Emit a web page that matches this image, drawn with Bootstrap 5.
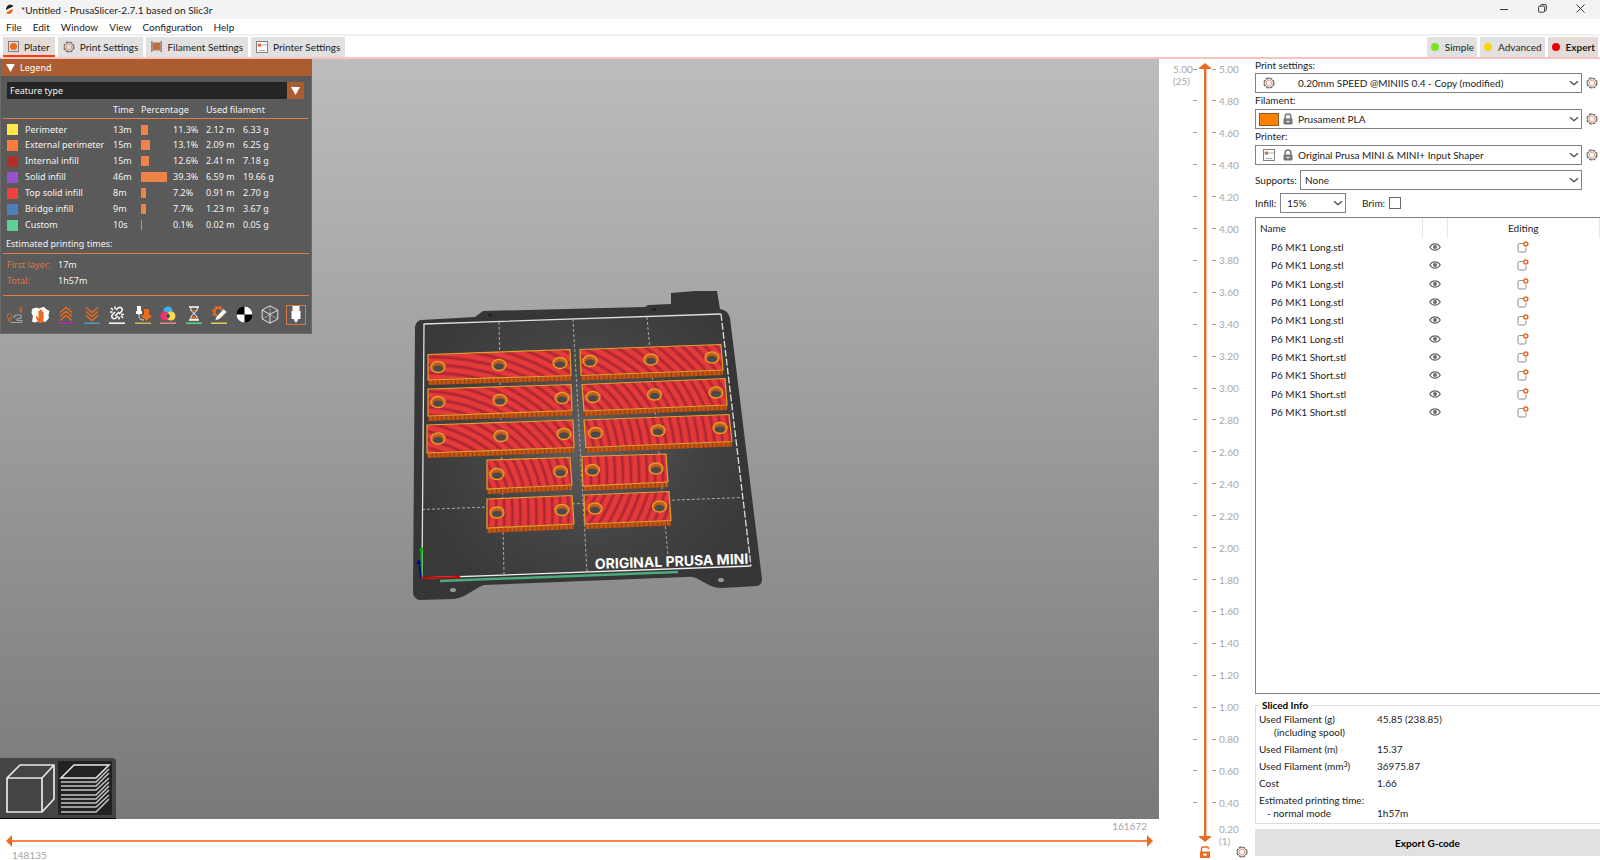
<!DOCTYPE html>
<html lang="en">
<head>
<meta charset="utf-8">
<meta name="viewport" content="width=device-width, initial-scale=1">
<title>*Untitled - PrusaSlicer-2.7.1 based on Slic3r</title>
<link href="https://cdn.jsdelivr.net/npm/bootstrap@5.3.0/dist/css/bootstrap.min.css" rel="stylesheet">
<style>
  body { font: 10px/12px Lato, "Open Sans", sans-serif; color: #1c1c1c; background: #fff; }
  button, select, input { font: inherit; color: inherit; }
  svg { display: block; flex: none; }
  .titlebar { height: 19px; background: #f3f3f3; }
  .winbtn { border: 0; background: none; width: 38px; padding: 0 2px 2px 0; display: flex; justify-content: center; align-items: center; }
  .menubar { height: 17px; border-bottom: 2px solid #f0f0f0; gap: 11px; padding: 0 6px; }
  .menubar a { color: #1c1c1c; text-decoration: none; }
  .tabs { height: 23px; gap: 3px; padding: 1px 2px 0 3px; border-bottom: 2px solid #f8c4be; }
  .tab { border: 0; background: #e1e1e1; height: 20px; padding: 0 5px 1px; display: flex; align-items: center; gap: 5px; line-height: 12px; }
  .tab.on { background: #e3dbd8; }
  .tab.line { border-bottom: 2px solid #fb3a12; padding-top: 1px; padding-bottom: 0; }
  .mode { padding: 0 3px 1px 4px; gap: 6px; }
  .stage { background: linear-gradient(#bcbcbc, #797979); }
  .legend-box { font: 9px/12px "Noto Sans", sans-serif; color: #f2f2f2; background: #5a5a5a; width: 312px; height: 275px; border: 1px solid #6c6c6c; border-top: 0; top: 0; left: 0; }
  .legend-head { height: 18px; background: #ab5c31; border: 0; color: #fff; gap: 5px; padding: 0 5px; font-size: 9px; }
  .legend-box select { appearance: none; border: 0; border-radius: 0; background: #252525; color: #f2f2f2; height: 17px; padding: 1px 3px 0; }
  .combo-arrow { width: 17px; height: 17px; background: #ab5c31; display: grid; place-items: center; pointer-events: none; }
  .legend-table { table-layout: fixed; width: 305px; margin: 0 2px; }
  .legend-table th { font-weight: 400; height: 19px; padding: 3px 0 0; border-bottom: 1px solid #e57c46; }
  .legend-table td { height: 16px; padding: 0; white-space: nowrap; }
  .legend-table tbody tr:first-child td { height: 19px; padding-top: 3px; }
  .swatch { width: 11px; height: 11px; margin-left: 4px; }
  .share { height: 10px; background: #ed8345; }
  .rule { height: 1px; background: #e57c46; margin: 0 2px; }
  .accent { color: #da7743; width: 51px; }
  .iconbar { padding: 0 5px 0 4px; height: 38px; }
  .iconbar button { border: 0; background: none; padding: 0; width: 20px; height: 20px; display: grid; place-items: center; }
  .iconbar button.on { border: 1px solid #da7743; }
  .views { background: #444; bottom: 0; left: 0; border-radius: 0 4px 0 0; padding: 3px 4px; border-bottom: 1px solid #000; }
  .views button { border: 0; padding: 0; background: none; width: 54px; height: 54px; }
  .views button.on { background: #222; }
  .hscale { height: 41px; color: #a5a5a5; padding: 1px 6px 0 6px; }
  .rail { appearance: none; margin: 0; padding: 0; border: 0; }
  .rail::-webkit-slider-thumb { appearance: none; width: 1px; height: 1px; }
  .rail.flat { height: 2px; background: #ff8346; }
  .rail.tall { width: 3px; background: linear-gradient(90deg, #ed6b21 67%, #fbc5aa 67%); }
  .vscale { width: 96px; color: #a8a8a8; padding: 4px 7px 0 14px; }
  .tick { height: 12px; display: flex; align-items: center; gap: 3px; }
  .dash { width: 4px; height: 1px; background: #a0a0a0; }
  .side { width: 345px; }
  .pick { appearance: none; border: 1px solid #828282; border-radius: 0; background: #fff; height: 20px; width: 100%; padding: 0 8px; color: #1c1c1c; }
  .pick.iconed { padding-left: 42px; }
  .over-left { left: 4px; top: 0; height: 20px; pointer-events: none; }
  .over-right { right: 3px; top: 0; height: 20px; pointer-events: none; }
  .preset { display: grid; grid-template-columns: 1fr 18px; align-items: center; }
  .gearbtn { border: 0; background: none; padding: 0 0 0 4px; }
  .caption { height: 16px; padding-top: 1px; }
  .caption:first-child { height: 14px; padding-top: 0; }
  .tickbox { appearance: none; width: 12px; height: 12px; border: 1px solid #6a6a6a; margin: 0; background: #fff; }
  .objects { border: 1px solid #828282; border-right: 0; margin-top: 4px; }
  .objects table { table-layout: fixed; width: 100%; height: 203px; }
  .objects th { font-weight: 400; height: 20px; padding: 0; border-right: 1px solid #e5e5e5; }
  .objects td { padding: 0; }
  .sliced { margin: 5px 0 0; padding: 0 3px; border: 1px solid #dcdcdc; border-right: 0; height: 125px; }
  .sliced legend { font-size: 10px; line-height: 12px; font-weight: 700; float: none; width: auto; margin: 0; padding: 0 3px; color: #000; }
  .info { display: grid; grid-template-columns: 118px 1fr; row-gap: 4px; padding-top: 2px; line-height: 13px; }
  .info dt, .info dd { font-weight: 400; margin: 0; }
  .info sup { font-size: 7px; line-height: 0; }
  .export { border: 0; background: #e1e1e1; height: 27px; font-weight: 700; color: #000; margin: 5px 0 4px; }
</style>
</head>
<body class="vh-100 d-flex flex-column overflow-hidden">

<svg width="0" height="0" class="position-absolute" aria-hidden="true">
  <symbol id="gear" viewBox="0 0 12 12"><circle cx="6" cy="6" r="5" fill="none" stroke="#777" stroke-width="1.3" stroke-dasharray="2.9 1.03"/><circle cx="6" cy="6" r="4.4" fill="none" stroke="#777" stroke-width=".8"/><circle cx="6" cy="6" r="2.7" fill="none" stroke="#f08a5a" stroke-width="1.1" stroke-dasharray="1.5 .62"/></symbol>
  <symbol id="chev" viewBox="0 0 10 6"><path d="M1 1.3l4 3.4 4-3.4" fill="none" stroke="#444" stroke-width="1.2"/></symbol>
  <symbol id="lock" viewBox="0 0 10 12"><path d="M2.2 6V3.4a2.8 2.4 0 0 1 5.6 0V6" fill="none" stroke="#777" stroke-width="1.5"/><rect x=".5" y="5.4" width="9" height="6.2" rx=".8" fill="#777"/><path d="M3.5 8.5h3" stroke="#fff" stroke-width="1.2"/></symbol>
  <symbol id="printer" viewBox="0 0 12 12"><rect x=".5" y=".5" width="11" height="11" fill="#fff" stroke="#808080"/><path d="M1 4h10M2.5 9.5h7" stroke="#999" stroke-width=".8"/><rect x="2" y="2.6" width="3" height="3" fill="#ed6b21"/></symbol>
  <symbol id="eye" viewBox="0 0 12 8"><path d="M.8 4C3-.2 9-.2 11.2 4 9 8.200 3 8.200.8 4z" fill="none" stroke="#6e6e6e" stroke-width="1.3"/><circle cx="6" cy="4" r="2" fill="#6e6e6e"/></symbol>
  <symbol id="edit" viewBox="0 0 12 12"><path d="M6 2.500H2.500Q1 2.500 1 4v5.500Q1 11 2.500 11H7.500Q9 11 9 9.500V6.500" fill="none" stroke="#8a8a8a" stroke-width="1"/><circle cx="8.800" cy="3" r="2" fill="#fff" stroke="#ed6b21" stroke-width="1.500"/></symbol>
</svg>

<header class="titlebar d-flex align-items-stretch">
  <div class="d-flex align-items-center flex-grow-1 ps-1" style="gap:6px">
    <svg width="11" height="11" viewBox="0 0 11 11"><circle cx="5.500" cy="5.500" r="5.500" fill="#fff"/><path d="M2 4.500Q3 1 6 .6 9 .6 9 2.500L2 6z" fill="#222"/><path d="M2 8.500L9 4.500Q9 8 6.500 9.800 3 10.800 2 8.500z" fill="#ed6b21"/></svg>
    <span>*Untitled - PrusaSlicer-2.7.1 based on Slic3r</span>
  </div>
  <button class="winbtn" aria-label="Minimize"><svg width="8" height="8" viewBox="0 0 8 8"><path d="M0 4.500h8" stroke="#222" stroke-width=".9"/></svg></button>
  <button class="winbtn" aria-label="Restore"><svg width="9" height="9" viewBox="0 0 9 9" fill="none" stroke="#222" stroke-width=".9"><rect x=".6" y="2.200" width="6" height="6" rx="1"/><path d="M2.500 1.900V1.500Q2.500.6 3.500.6H7Q8.400.6 8.400 2v3.500Q8.400 6.600 7.500 6.600H7"/></svg></button>
  <button class="winbtn" aria-label="Close"><svg width="9" height="9" viewBox="0 0 9 9"><path d="M.5.500l8 8M8.500.500l-8 8" stroke="#222" stroke-width=".9"/></svg></button>
</header>

<nav class="menubar d-flex align-items-center">
  <a href="#">File</a><a href="#">Edit</a><a href="#">Window</a><a href="#">View</a><a href="#">Configuration</a><a href="#">Help</a>
</nav>

<div class="tabs d-flex">
  <button class="tab on line"><svg width="11" height="11" viewBox="0 0 11 11"><rect x=".5" y=".5" width="10" height="10" fill="#ddd" stroke="#808080"/><circle cx="5.500" cy="5.500" r="3.600" fill="#ed6b21"/></svg>Plater</button>
  <button class="tab"><svg width="12" height="12"><use href="#gear"/></svg>Print Settings</button>
  <button class="tab"><svg width="11" height="11" viewBox="0 0 11 11"><path d="M.8 0v11M10.200 0v11" stroke="#888" stroke-width="1.500"/><rect x="1.500" y="1.500" width="8" height="8" fill="#bd6f45"/></svg>Filament Settings</button>
  <button class="tab"><svg width="12" height="12"><use href="#printer"/></svg>Printer Settings</button>
  <span class="flex-grow-1"></span>
  <button class="tab mode"><svg width="8" height="8"><circle cx="4" cy="4" r="4" fill="#7be322"/></svg>Simple</button>
  <button class="tab mode"><svg width="8" height="8"><circle cx="4" cy="4" r="4" fill="#ffd500"/></svg>Advanced</button>
  <button class="tab mode on fw-bold"><svg width="8" height="8"><circle cx="4" cy="4" r="4" fill="#e80000"/></svg>Expert</button>
</div>

<main class="d-flex flex-grow-1" style="min-height:0">
  <section class="d-flex flex-column flex-grow-1" style="min-width:0">
    <div class="stage position-relative flex-grow-1" style="min-height:0">
      <svg id="scene" class="w-100 h-100" viewBox="0 59 1159 760">
        <defs><radialGradient id="glow" gradientUnits="userSpaceOnUse" cx="585" cy="440" r="180"><stop offset="0" stop-color="#606060"/><stop offset=".55" stop-color="#444"/><stop offset="1" stop-color="#393939"/></radialGradient></defs>
        <path d="M415 327Q416 321 421 320L475 317 483 311 645 307 648 305 671 304 671 293 695 291 717 291 720 309Q728 310 730 318L762 579Q762 585 757 586L722 588Q714 588 707 584L696 578Q691 576 685 577L484 585Q480 586 476 589L464 596Q460 598 454 599L419 600Q413 598 413 592z" fill="#363636"/>
        <path d="M424 324L721 314 751 566 422 578z" fill="url(#glow)"/>
        <g fill="#222"><ellipse cx="490" cy="315" rx="2.500" ry="1.500"/><ellipse cx="654" cy="309.500" rx="2.500" ry="1.500"/></g>
        <g fill="#999"><ellipse cx="453" cy="590" rx="3" ry="2"/><ellipse cx="721" cy="580" rx="3" ry="2"/></g>
        <g stroke="#a8a8a8" stroke-width="1" stroke-dasharray="3 2" fill="none"><path d="M499 322L504 575M573 319L587 572M647 317L668 556M422 509.500L743 497.500"/></g>
        <path d="M422 578L424 324 721 314" fill="none" stroke="#dedede" stroke-width="1.300"/>
        <path d="M721 314L751 566" fill="none" stroke="#ddd" stroke-width="1.300" stroke-dasharray="7 2"/>
        <path d="M422 578L751 566" stroke="#eee" stroke-width="1.300"/>
        <path d="M440 581L678 572" stroke="#4bab7c" stroke-width="2.500"/>
        <path d="M421 578h1L460 577" stroke="#d80000" stroke-width="2"/><path d="M455 574.500l6 2.500-6 2z" fill="#d80000"/>
        <path d="M421.500 577V549" stroke="#00b800" stroke-width="2"/><path d="M419 551l2.500-5 2.500 5z" fill="#00b800"/>
        <path d="M421 578L419 561" stroke="#0000a0" stroke-width="1.500"/><path d="M416.500 564l2-5 3 4.500z" fill="#0000a0"/>
        <text x="595" y="569" transform="rotate(-2 595 569)" font-family="Inter, sans-serif" font-weight="700" font-size="14" fill="#fff">ORIGINAL PRUSA MINI</text>
        <g id="parts"></g>
      </svg>

      <div class="legend-box position-absolute d-flex flex-column">
        <button class="legend-head d-flex align-items-center"><svg width="9" height="8"><path d="M0 0h9L4.500 8z" fill="#fff"/></svg>Legend</button>
        <div class="d-flex" style="margin:6px 7px 0 6px"><select class="flex-grow-1" aria-label="Legend view"><option>Feature type</option></select><span class="combo-arrow"><svg width="9" height="8"><path d="M0 0h9L4.500 8z" fill="#fff"/></svg></span></div>
        <table class="legend-table">
          <colgroup><col style="width:22px"><col style="width:88px"><col style="width:28px"><col style="width:32px"><col style="width:33px"><col style="width:37px"><col></colgroup>
          <thead><tr><th></th><th></th><th>Time</th><th colspan="2">Percentage</th><th colspan="2">Used filament</th></tr></thead>
          <tbody id="features"></tbody>
        </table>
        <div style="padding:5px 5px 3px">Estimated printing times:</div>
        <div class="rule"></div>
        <div class="d-flex" style="padding:5px 6px 4px"><span class="accent">First layer:</span><span>17m</span></div>
        <div class="d-flex" style="padding:0 6px 8px"><span class="accent">Total:</span><span>1h57m</span></div>
        <div class="rule"></div>
        <div class="iconbar d-flex justify-content-between align-items-center">
          <button aria-label="Travel"><svg width="18" height="18" viewBox="0 0 18 18" fill="none"><circle cx="3.500" cy="10" r="2.300" stroke="#c96a3a"/><path d="M1.700 12l1.800 4 1.800-4" stroke="#c96a3a"/><circle cx="15" cy="2.500" r="1.500" stroke="#c96a3a"/><path d="M13.700 4L15 7l1.300-3" stroke="#c96a3a"/><path d="M5 16.500h10q2 0 1-2h-5q-1-2 1-2h3V9H9v2H7" stroke="#aaa"/></svg></button>
          <button aria-label="Wipe"><svg width="19" height="18" viewBox="0 0 19 18"><path d="M1 3L5 1.500 8 2.500 13 .8 15 3 18.500 5 17.500 9 18 12 14.500 16 9 14.500 4 16.500 1 15.500 2 10 .5 7z" fill="#fff"/><path d="M7 16L4.500 10.500l1.300-.6L7.500 12V5h1.200v4V3.500h1.400V9V4h1.300v5.500V6h1.200v6q0 3-1.600 5H8z" fill="#ed6b21"/></svg></button>
          <button aria-label="Retractions"><svg width="16" height="18" viewBox="0 0 16 18" fill="none" stroke="#ed6b21" stroke-width="1.400"><path d="M2 6.500l6-5 6 5M2 10.500l6-5 6 5M2 14.500l6-5 6 5"/><path d="M0 17.200h16" stroke="#c022c0"/></svg></button>
          <button aria-label="Deretractions"><svg width="16" height="18" viewBox="0 0 16 18" fill="none" stroke="#ed6b21" stroke-width="1.400"><path d="M2 1.500l6 5 6-5M2 5.500l6 5 6-5M2 9.500l6 5 6-5"/><path d="M0 17.200h16" stroke="#48a6cc"/></svg></button>
          <button aria-label="Seams"><svg width="16" height="18" viewBox="0 0 16 18" fill="none" stroke="#fff" stroke-width="1.500"><path d="M7 4l2-2q2-1.500 3.500 0t0 3.500L10 8M6 6L3.500 8.500Q2 10.500 3.500 12T7 12l2-2M6 10l4-4M2 2l2 2M6 .5V3M1 6h2.500M12 10l2 2M10 11v2.500M12 8.500h3"/><path d="M0 17.200h16"/></svg></button>
          <button aria-label="Tool changes"><svg width="16" height="18" viewBox="0 0 16 18"><path d="M2 0h4v5h1v3H5L4 10 3 8H1V5h1z" fill="#fff"/><path d="M9 3h5v6h2v3h-2l-2.500 3L9 12H7V9h2z" fill="#ed6b21"/><path d="M4 10q0 4 5 4" fill="none" stroke="#ddd"/><path d="M0 17.200h16" stroke="#c8bd52" stroke-width="1.500"/></svg></button>
          <button aria-label="Color changes"><svg width="16" height="18" viewBox="0 0 16 18"><circle cx="8" cy="5" r="4.500" fill="#36b4ee"/><circle cx="4.800" cy="10" r="4.500" fill="#ef2f72"/><circle cx="11" cy="10" r="4.500" fill="#ffd84a"/><path d="M8 7l2 3-2 3-2-3z" fill="#444"/><path d="M0 17.200h16" stroke="#d98e84" stroke-width="1.500"/></svg></button>
          <button aria-label="Pause prints"><svg width="16" height="18" viewBox="0 0 16 18"><path d="M3 1h10M3 14h10" stroke="#fff" stroke-width="1.700"/><path d="M4.500 1.500q0 4 3.500 6-3.500 2-3.500 6h7q0-4-3.500-6 3.500-2 3.500-6" fill="none" stroke="#fff"/><path d="M6 4h4L8 6.500zM5.500 13q1-3 2.500-3t2.500 3z" fill="#ed6b21"/><path d="M0 17.200h16" stroke="#51e081" stroke-width="1.500"/></svg></button>
          <button aria-label="Custom G-codes"><svg width="16" height="18" viewBox="0 0 16 18"><circle cx="7.500" cy="6" r="4" fill="none" stroke="#ed6b21" stroke-width="2.200"/><circle cx="7.500" cy="6" r="5.700" fill="none" stroke="#ed6b21" stroke-width="1.500" stroke-dasharray="2.400 2.080"/><path d="M4 14.500L5 11l7.500-8L16 6l-8 7.500z" fill="#fff" stroke="#5a5a5a" stroke-width=".7"/><path d="M0 17.200h16" stroke="#e6d14d" stroke-width="1.500"/></svg></button>
          <button aria-label="Center of gravity"><svg width="17" height="17" viewBox="0 0 17 17"><circle cx="8.500" cy="8.500" r="8" fill="#000"/><path d="M8.500 8.500V.5a8 8 0 0 1 8 8zM8.500 8.500v8a8 8 0 0 1-8-8z" fill="#fff"/></svg></button>
          <button aria-label="Shells"><svg width="18" height="19" viewBox="0 0 18 19" fill="none" stroke="#e2e2e2"><path d="M9 .8l7.800 4.200v9L9 18.200 1.200 14V5zM9 9.500v8.700M1.200 5L9 9.500 16.800 5"/><path d="M1.200 14L9 9.500l7.800 4.500M9 .8v8.700" stroke="#bbb" stroke-dasharray="2 1"/></svg></button>
          <button class="on" aria-label="Tool marker"><svg width="12" height="17" viewBox="0 0 12 17"><path d="M2.500 0h7v5H10.500v8H8.500L6 17l-2.500-4h-2V5h1z" fill="#fff"/></svg></button>
        </div>
      </div>

      <div class="views position-absolute d-flex">
        <button aria-label="3D editor view"><svg width="54" height="54" viewBox="0 0 54 54" fill="none" stroke="#e8e8e8" stroke-width="1.700" stroke-linejoin="round"><path d="M3 17h35v34H3zM3 17L16 4h34L38 17M50 4v34L38 51"/></svg></button>
        <button class="on" aria-label="Preview"><svg width="54" height="54" viewBox="0 0 54 54" fill="none" stroke="#c4c4c4" stroke-width="1.500"><path stroke="#e8e8e8" d="M3 17L16 4h35L38 17z"/><path d="M3 21h35L51 8M3 25h35L51 12M3 29h35L51 17M3 34h35L51 21M3 38h35L51 25M3 42h35L51 29M3 46h35L51 34M3 51h35L51 38"/></svg></button>
      </div>
    </div>
    <div class="hscale d-flex flex-column gap-1">
      <div class="text-end" style="padding-right:6px">161672</div>
      <div class="d-flex align-items-center" style="height:9px"><svg width="6" height="12"><path d="M6 0v12L0 6z" fill="#ed6b21"/></svg><input type="range" class="rail flat flex-grow-1" aria-label="Moves"><svg width="6" height="12"><path d="M0 0v12l6-6z" fill="#ed6b21"/></svg></div>
      <div style="padding-left:6px">148135</div>
    </div>
  </section>

  <section class="vscale d-flex">
    <div style="width:20px">5.00<br>(25)</div>
    <div id="ticksL" class="d-flex flex-column justify-content-between" style="width:5px;margin-bottom:51px"></div>
    <div class="d-flex flex-column align-items-center" style="width:14px">
      <svg width="12" height="6"><path d="M6 0l6 5v1H0V5z" fill="#ed6b21"/></svg>
      <input type="range" class="rail tall flex-grow-1" aria-label="Layers">
      <svg width="12" height="6"><path d="M0 0h12v1L6 6 0 1z" fill="#ed6b21"/></svg>
      <button class="border-0 bg-transparent p-0 mt-1" style="margin-bottom:2px" aria-label="Unlock"><svg width="10" height="12" viewBox="0 0 10 12"><path d="M1.500 6V2.500Q1.500 1 3 1h4q1.500 0 1.500 2" fill="none" stroke="#ed6b21" stroke-width="1.500"/><path d="M0 5.500h10V12H0z" fill="#ed6b21"/><path d="M3 8.700h4M5 7.200v3" stroke="#fff" stroke-width="1.200"/></svg></button>
    </div>
    <div class="d-flex flex-column flex-grow-1">
      <div id="ticksR" class="d-flex flex-column justify-content-between flex-grow-1" style="margin-bottom:14px"></div>
      <div style="padding-left:7px;height:37px">0.20<br>(1)</div>
    </div>
    <button class="gearbtn align-self-end p-0" style="margin:0 0 2px -12px" aria-label="Slider settings"><svg width="12" height="12"><use href="#gear"/></svg></button>
  </section>

  <aside class="side d-flex flex-column flex-shrink-0">
    <label class="caption" for="ps">Print settings:</label>
    <div class="preset">
      <div class="position-relative"><select id="ps" class="pick iconed d-block"><option>0.20mm SPEED @MINIIS 0.4 - Copy (modified)</option></select><span class="over-left position-absolute d-flex align-items-center ps-1"><svg width="12" height="12"><use href="#gear"/></svg></span><span class="over-right position-absolute d-flex align-items-center"><svg width="10" height="6"><use href="#chev"/></svg></span></div>
      <button class="gearbtn" aria-label="Edit print preset"><svg width="12" height="12"><use href="#gear"/></svg></button>
    </div>
    <label class="caption" for="fi">Filament:</label>
    <div class="preset">
      <div class="position-relative"><select id="fi" class="pick iconed d-block"><option>Prusament PLA</option></select><span class="over-left position-absolute d-flex align-items-center gap-1"><svg width="20" height="13"><rect x=".5" y=".5" width="19" height="12" fill="#ff8000" stroke="#8a5a28"/></svg><svg width="10" height="12"><use href="#lock"/></svg></span><span class="over-right position-absolute d-flex align-items-center"><svg width="10" height="6"><use href="#chev"/></svg></span></div>
      <button class="gearbtn" aria-label="Edit filament preset"><svg width="12" height="12"><use href="#gear"/></svg></button>
    </div>
    <label class="caption" for="pr">Printer:</label>
    <div class="preset">
      <div class="position-relative"><select id="pr" class="pick iconed d-block"><option>Original Prusa MINI &amp; MINI+ Input Shaper</option></select><span class="over-left position-absolute d-flex align-items-center gap-2 ps-1"><svg width="12" height="12"><use href="#printer"/></svg><svg width="10" height="12"><use href="#lock"/></svg></span><span class="over-right position-absolute d-flex align-items-center"><svg width="10" height="6"><use href="#chev"/></svg></span></div>
      <button class="gearbtn" aria-label="Edit printer preset"><svg width="12" height="12"><use href="#gear"/></svg></button>
    </div>
    <div class="d-flex align-items-center" style="margin:5px 18px 3px 0"><label for="su" style="width:45px">Supports:</label><div class="position-relative flex-grow-1"><select id="su" class="pick d-block" style="padding-left:4px"><option>None</option></select><span class="over-right position-absolute d-flex align-items-center"><svg width="10" height="6"><use href="#chev"/></svg></span></div></div>
    <div class="d-flex align-items-center"><label for="inf" style="width:25px">Infill:</label><div class="position-relative" style="width:66px"><select id="inf" class="pick d-block" style="padding-left:6px"><option>15%</option></select><span class="over-right position-absolute d-flex align-items-center"><svg width="10" height="6"><use href="#chev"/></svg></span></div><label for="br" style="width:27px;margin-left:16px">Brim:</label><input id="br" type="checkbox" class="tickbox"></div>

    <div class="objects flex-grow-1">
      <table>
        <colgroup><col style="width:166px"><col style="width:25px"><col></colgroup>
        <thead><tr><th style="padding-left:4px">Name</th><th></th><th class="text-center">Editing</th></tr></thead>
        <tbody id="objects"></tbody>
      </table>
    </div>

    <fieldset class="sliced">
      <legend>Sliced Info</legend>
      <dl class="info m-0">
        <dt>Used Filament (g)<br><span style="padding-left:15px">(including spool)</span></dt><dd>45.85 (238.85)</dd>
        <dt>Used Filament (m)</dt><dd>15.37</dd>
        <dt>Used Filament (mm<sup>3</sup>)</dt><dd>36975.87</dd>
        <dt>Cost</dt><dd>1.66</dd>
        <dt>Estimated printing time:<br><span style="padding-left:8px">- normal mode</span></dt><dd class="align-self-end">1h57m</dd>
      </dl>
    </fieldset>
    <button class="export">Export G-code</button>
  </aside>
</main>

<script src="https://cdn.jsdelivr.net/npm/bootstrap@5.3.0/dist/js/bootstrap.bundle.min.js"></script>
<script>
  const put = (id, html) => document.getElementById(id).innerHTML = html;

  const features = [
    ['#ffe64d', 'Perimeter', '13m', 11.3, '2.12 m', '6.33 g'],
    ['#ff7d38', 'External perimeter', '15m', 13.1, '2.09 m', '6.25 g'],
    ['#b03029', 'Internal infill', '15m', 12.6, '2.41 m', '7.18 g'],
    ['#9654cc', 'Solid infill', '46m', 39.3, '6.59 m', '19.66 g'],
    ['#f04040', 'Top solid infill', '8m', 7.2, '0.91 m', '2.70 g'],
    ['#4d80ba', 'Bridge infill', '9m', 7.7, '1.23 m', '3.67 g'],
    ['#5ed194', 'Custom', '10s', 0.1, '0.02 m', '0.05 g']
  ];
  put('features', features.map(([c, n, t, p, m, g]) =>
    `<tr><td><div class="swatch" style="background:${c}"></div></td><td>${n}</td><td>${t}</td>` +
    `<td><div class="share" style="width:${Math.max(1, Math.round(p * .65))}px"></div></td><td>${p}%</td><td>${m}</td><td>${g}</td></tr>`).join(''));

  const heights = Array.from({ length: 24 }, (_, i) => (5 - i * .2).toFixed(2));
  put('ticksL', heights.map(() => '<div class="tick"><span class="dash"></span></div>').join(''));
  put('ticksR', heights.map(h => `<div class="tick"><span class="dash"></span>${h}</div>`).join(''));

  const names = [...Array(6).fill('P6 MK1 Long.stl'), ...Array(4).fill('P6 MK1 Short.stl')];
  put('objects', names.map(n => `<tr><td style="padding-left:15px">${n}</td><td><svg class="mx-auto" width="12" height="8"><use href="#eye"/></svg></td><td><svg class="mx-auto" width="12" height="12"><use href="#edit"/></svg></td></tr>`).join(''));

  // Printed parts: top-face corners (TL, TR, BR, BL), holes, centre of the infill arcs
  const parts = [
    [[428,354.5, 570,349.5, 571,375.5, 428,380], [[438,367],[499,365],[560,363]], [430,600]],
    [[580,349.5, 721,344.5, 723,370, 581,375.5], [[590,361],[651,359.5],[712,357.5]], [490,560]],
    [[428,389, 571,384.5, 572,410.5, 428,416], [[438,402],[500,400],[562,398]], [420,560]],
    [[582,384.5, 725,378.5, 727,405, 584,411], [[593,397],[654.5,394.5],[716,392.5]], [500,500]],
    [[427,425, 573,420, 574,447.5, 427,453], [[438,438.5],[501,436],[564,434]], [400,570]],
    [[584,420, 729,414.5, 732,441.5, 586,447.5], [[595.5,433],[658,430.5],[720,428]], [450,475]],
    [[487,460, 570,457.5, 572,485, 487,489], [[497,474],[560.5,471.5]], [400,520]],
    [[582,456.5, 666,454, 668,482, 583,486], [[592.5,470],[656,468.5]], [450,475]],
    [[487,499, 572,495.5, 574,524, 487,528], [[497,512.5],[562,510]], [300,515]],
    [[584,495, 669,491.5, 671,520.5, 585,524], [[595,508.5],[659.5,506.5]], [450,430]]
  ];
  put('parts', parts.map(([q, holes, [cx, cy]], i) => {
    const [x1, y1, x2, y2, x3, y3, x4, y4] = q, d = `M${x1} ${y1}L${x2} ${y2} ${x3} ${y3} ${x4} ${y4}z`;
    const mx = (x1 + x3) / 2, my = (y1 + y3) / 2, r = Math.hypot(mx - cx, my - cy);
    let arcs = '';
    for (let k = Math.max(4, r - 90); k < r + 90; k += 8) arcs += `<circle cx="${cx}" cy="${cy}" r="${k.toFixed(1)}"/>`;
    return `<clipPath id="c${i}"><path d="${d}"/></clipPath>` +
      `<path d="M${x4} ${y4}L${x3} ${y3}v5L${x4} ${y4 + 5}z" fill="#c35413"/>` +
      `<path d="M${x4} ${y4 + 2.5}L${x3} ${y3 + 2.5}" stroke="#8c3d10" stroke-width="5" stroke-dasharray="1 3.500"/>` +
      `<path d="${d}" fill="#e43a3a"/><g clip-path="url(#c${i})" fill="none"><g stroke="#cc3038" stroke-width="4">${arcs}</g><g stroke="#ad2834" stroke-width="1.800">${arcs}</g></g>` +
      `<path d="${d}" fill="none" stroke="#dca32c" stroke-width="1.200"/>` +
      holes.map(([x, y]) => `<ellipse cx="${x}" cy="${y}" rx="7" ry="5.700" fill="#bd5a1b" stroke="#e3a52c" stroke-width="1.200"/><ellipse cx="${x}" cy="${y}" rx="5.500" ry="4.300" fill="none" stroke="#e08a2c" stroke-width=".8" stroke-dasharray="1.500 1"/><ellipse cx="${x}" cy="${y + 1.5}" rx="4.800" ry="3" fill="#4a4a4a"/>`).join('');
  }).join(''));
</script>
</body>
</html>
